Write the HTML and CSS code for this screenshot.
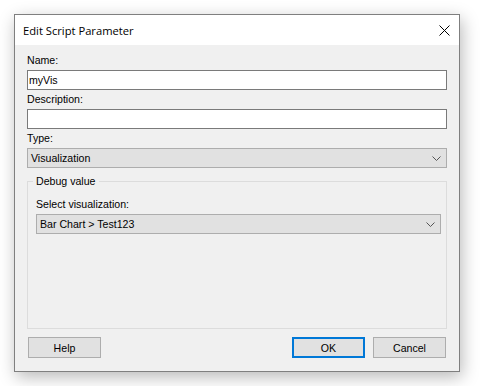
FILE: index.html
```html
<!DOCTYPE html>
<html lang="en">
<head>
  <meta charset="UTF-8" />
  <title>Edit Script Parameter</title>
  <link rel="stylesheet" href="styles.css">
</head>
<body>

  <!-- Dialog window -->
  <div class="window">
    <div class="titlebar">
      <span class="title">Edit Script Parameter</span>
      <button class="close" aria-label="Close">
        <svg width="11" height="11" viewBox="0 0 11 11">
          <path d="M0.5 0.5 L10.5 10.5 M10.5 0.5 L0.5 10.5" stroke="#000" stroke-width="1" fill="none"/>
        </svg>
      </button>
    </div>

    <div class="content">
      <label class="label">Name:</label>
      <div class="textbox">myVis</div>

      <label class="label">Description:</label>
      <div class="textbox"></div>

      <label class="label">Type:</label>
      <div class="combo">
        <span>Visualization</span>
        <svg class="chevron" width="9" height="5" viewBox="0 0 9 5">
          <path d="M0.5 0.5 L4.5 4.5 L8.5 0.5" stroke="#555" stroke-width="1" fill="none"/>
        </svg>
      </div>

      <fieldset class="group">
        <legend>Debug value</legend>
        <label class="label">Select visualization:</label>
        <div class="combo">
          <span>Bar Chart &gt; Test123</span>
          <svg class="chevron" width="9" height="5" viewBox="0 0 9 5">
            <path d="M0.5 0.5 L4.5 4.5 L8.5 0.5" stroke="#555" stroke-width="1" fill="none"/>
          </svg>
        </div>
      </fieldset>

      <div class="buttons">
        <button class="btn">Help</button>
        <div class="spacer"></div>
        <button class="btn default">OK</button>
        <button class="btn">Cancel</button>
      </div>
    </div>
  </div>

</body>
</html>
```

FILE: styles.css
```css
body {
  margin: 0;
  background: #fff;
  font-family: 'Liberation Sans', Arial, sans-serif;
  font-size: 10.6px;
  color: #000;
}

/* Window frame */
.window {
  margin: 14px;
  width: 446px;
  height: 358px;
  box-sizing: border-box;
  border: 1px solid #7f7f7f;
  background: #f0f0f0;
  box-shadow: 2px 5px 16px rgba(0, 0, 0, 0.28);
  display: flex;
  flex-direction: column;
}

.titlebar {
  height: 30px;
  background: #fff;
  display: flex;
  align-items: center;
  justify-content: space-between;
  padding-left: 8px;
}
.title {
  font-family: 'Open Sans', 'Noto Sans', sans-serif;
  font-size: 11.2px;
  color: #000;
}
.close {
  width: 30px;
  height: 30px;
  border: none;
  background: none;
  padding: 0;
  display: flex;
  align-items: center;
  justify-content: center;
}

/* Form area */
.content {
  flex: 1;
  display: flex;
  flex-direction: column;
  padding: 9px 12px 13px 12px;
}

.label {
  display: block;
  line-height: 13px;
  margin-bottom: 3px;
}

.textbox {
  height: 20px;
  box-sizing: border-box;
  border: 1px solid #7a7a7a;
  background: #fff;
  line-height: 18px;
  padding-left: 1px;
  margin-bottom: 3px;
}

.combo {
  height: 20px;
  box-sizing: border-box;
  border: 1px solid #adadad;
  background: #e1e1e1;
  line-height: 18px;
  padding: 0 5px 0 3px;
  display: flex;
  align-items: center;
  justify-content: space-between;
}

/* Debug value group */
.group {
  flex: 1;
  margin: 7px 0 0 0;
  border: 1px solid #dcdcdc;
  padding: 10px 5px 0 8px;
}
.group legend {
  line-height: 13px;
  padding: 0 3px;
  margin-left: -3px;
}

.buttons {
  display: flex;
  gap: 8px;
  margin: 8px 1px 0 1px;
}
.spacer {
  flex: 1;
}
.btn {
  width: 73px;
  height: 21px;
  box-sizing: border-box;
  border: 1px solid #adadad;
  background: #e1e1e1;
  font-family: 'Liberation Sans', Arial, sans-serif;
  font-size: 10.6px;
  color: #000;
  padding: 0;
}
.btn.default {
  border: 2px solid #0078d7;
}
```
